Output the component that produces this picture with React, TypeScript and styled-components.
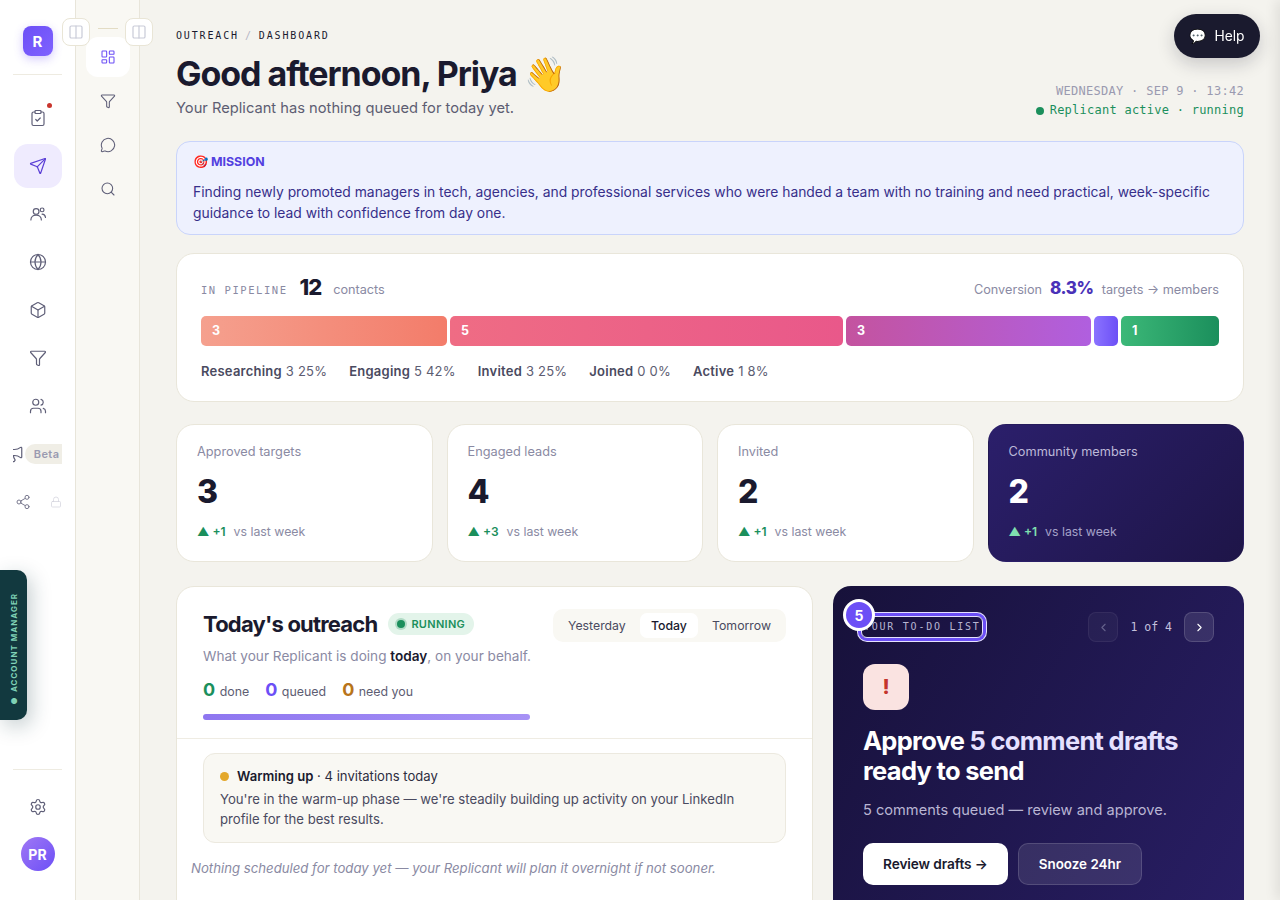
import React from 'react';
import styled, { createGlobalStyle } from 'styled-components';
import { ClipboardCheck, Send, Globe, Box, Filter, Users, Megaphone, Share2, Lock, Settings, Columns2, LayoutDashboard, MessageCircle, Search, ChevronLeft, ChevronRight } from 'lucide-react';

const Global = createGlobalStyle`
  html, body { margin: 0; padding: 0; height: 100%; overflow: hidden; background: #f4f3ee; }
  body { font-family: Inter, "Noto Sans", sans-serif; color: #1a1a2e; }
  * { box-sizing: border-box; }
`;
const mono = `"DejaVu Sans Mono", "Liberation Mono", monospace`;

const Shell = styled.div`display: flex; width: 1280px; height: 900px; overflow: hidden; position: relative;`;
const Rail = styled.aside`
  width: 76px; flex: none; background: #fff; border-right: 1px solid #e8e5da;
  display: flex; flex-direction: column; align-items: center; padding-top: 26px; position: relative;
`;
const Logo = styled.div`
  width: 30px; height: 30px; border-radius: 8px; background: linear-gradient(135deg, #6c4ff6, #7f62ff);
  color: #fff; font-weight: 700; font-size: 15px; display: flex; align-items: center; justify-content: center;
  box-shadow: 0 3px 10px rgba(108,79,246,.3);
`;
const RailDivider = styled.div`width: 49px; height: 1px; background: #eeebe1; flex: none;`;
const TopDivider = styled(RailDivider)`margin: 18px 0 21px;`;
const BottomDivider = styled(RailDivider)`margin-top: auto; margin-bottom: 13px;`;
const RailItem = styled.div<{ $active?: boolean }>`
  width: 48px; height: 44px; flex: none; border-radius: 14px; margin-bottom: 4px; position: relative; overflow: hidden;
  background: ${p => p.$active ? '#efebfe' : 'transparent'};
  color: ${p => p.$active ? '#5b3fd6' : '#5f5f78'};
  display: flex; align-items: center; justify-content: center;
`;
const Dot = styled.span`position: absolute; width: 5px; height: 5px; border-radius: 50%; background: #c9352d; top: 103px; left: 47px;`;
const ClippedRow = styled.div`
  width: 49px; height: 44px; margin-bottom: 4px; flex: none; overflow: hidden; display: flex; align-items: center; gap: 1px;
`;
const BetaPill = styled.span`
  flex: none; background: #f0eee6; color: #9a9ab0; font-size: 11px; font-weight: 600; letter-spacing: .4px;
  border-radius: 10px 0 0 10px; padding: 0 3px 0 9px; height: 20px; width: 37px; line-height: 20px; overflow: hidden;
`;
const ShareRow = styled(ClippedRow)`padding-left: 2px; gap: 19px;`;
const GearWrap = styled.div`color: #5f5f78; height: 48px; display: flex; align-items: center; flex: none;`;
const Avatar = styled.div`
  width: 34px; height: 34px; border-radius: 50%; background: linear-gradient(135deg, #a078f5, #6c4ff6); margin: 6px 0 29px;
  color: #fff; font-size: 14px; font-weight: 700; display: flex; align-items: center; justify-content: center; flex: none;
`;
const ToggleBtn = styled.div<{ $left: number }>`
  position: absolute; top: 18px; left: ${p => p.$left}px; width: 28px; height: 28px; border-radius: 8px; z-index: 5;
  background: #fff; border: 1px solid #e9e5d6; color: #c9cbd8; display: flex; align-items: center; justify-content: center;
`;
const ManagerTab = styled.div`
  position: absolute; left: 0; top: 570px; width: 27px; height: 150px; z-index: 6; background: #12393f; padding-top: 9px;
  border-radius: 0 10px 10px 0; box-shadow: 4px 6px 20px rgba(18,57,63,.25);
  display: flex; align-items: center; justify-content: center;
`;
const ManagerText = styled.span`
  writing-mode: vertical-rl; transform: rotate(180deg); white-space: nowrap; color: #7fd1b5;
  font-size: 8px; font-weight: 700; letter-spacing: 1px;
`;

const SubRail = styled.nav`
  width: 64px; flex: none; background: #f9f8f3; border-right: 1px solid #e8e5da;
  display: flex; flex-direction: column; align-items: center; padding-top: 28px;
`;
const SubLine = styled.div`width: 20px; height: 1px; background: #e3dcc4; margin-bottom: 8px;`;
const SubItem = styled.div<{ $active?: boolean }>`
  width: 44px; height: 40px; flex: none; margin-bottom: 4px; border-radius: 12px; display: flex; align-items: center; justify-content: center;
  background: ${p => p.$active ? '#fff' : 'transparent'}; color: ${p => p.$active ? '#6c4ff6' : '#5f5f78'};
`;

const Main = styled.main`flex: 1; min-width: 0; padding: 29px 36px 0; overflow: hidden;`;
const Crumbs = styled.div`font-family: ${mono}; font-size: 10px; line-height: 14px; letter-spacing: 1.85px; color: #1a1a2e; font-weight: 500; display: flex; gap: 6px;`;
const CrumbSep = styled.span`color: #b5b5c5;`;
const Header = styled.header`display: flex; justify-content: space-between; align-items: flex-end; margin-top: 9px; margin-bottom: 22px;`;
const H1 = styled.h1`margin: 0; font-size: 34px; line-height: 44px; font-weight: 700; letter-spacing: -1.05px; color: #1a1a2e;`;
const Sub = styled.p`margin: 1px 0 0; font-size: 14.7px; line-height: 22px; color: #5d5d72;`;
const Stamp = styled.div`text-align: right; font-family: ${mono}; font-size: 12px; line-height: 19px; margin-bottom: -1px; letter-spacing: .3px; color: #9a9ab0;`;
const Active = styled.div`color: #1b8f5c; display: flex; align-items: center; justify-content: flex-end; gap: 6px; letter-spacing: .25px;`;
const ActiveDot = styled.i`width: 8px; height: 8px; border-radius: 50%; background: #1b8f5c;`;

const Mission = styled.section`
  background: #eef1fe; border: 1px solid #c9d4fb; border-radius: 14px; padding: 11px 16px 10px; margin-bottom: 18px;
`;
const MissionTitle = styled.div`font-size: 12.4px; line-height: 18px; font-weight: 700; color: #5240e0; margin-bottom: 11px;`;
const MissionText = styled.p`margin: 0; font-size: 13.86px; line-height: 21px; color: #372f8a;`;

const Card = styled.section`background: #fff; border: 1px solid #e9e6da; border-radius: 18px;`;
const Pipeline = styled(Card)`padding: 19px 24px 20px; margin-bottom: 22px; height: 149px;`;
const PipeHead = styled.div`display: flex; justify-content: space-between; align-items: center; height: 32px; margin-bottom: 11px;`;
const PipeSide = styled.div`display: flex; align-items: center;`;
const PipeLabel = styled.span`font-family: ${mono}; font-size: 10.5px; letter-spacing: 1.55px; color: #8a8aa3; margin-right: 12px; padding-top: 2px;`;
const PipeCount = styled.span`font-size: 22px; font-weight: 800; letter-spacing: -1.1px; color: #1a1a2e; margin: -4px 12px 0 0;`;
const PipeNote = styled.span`font-size: 12.7px; color: #8a8aa3;`;
const Conv = styled.span`font-size: 17px; font-weight: 800; letter-spacing: -.4px; color: #4a32b8; margin: -2px 8px 0;`;
const Bar = styled.div`display: flex; gap: 3px; height: 30px;`;
const Seg = styled.div<{ $w: number; $bg: string }>`
  width: ${p => p.$w}px; flex: none; border-radius: 5px; background: ${p => p.$bg};
  color: #fff; font-size: 12.5px; font-weight: 700; padding-left: 11px; line-height: 29px;
`;
const Legend = styled.div`display: flex; gap: 22px; margin-top: 16px; font-size: 13px; line-height: 18px; color: #5d5d72; letter-spacing: .23px;`;
const LegendKey = styled.b`font-weight: 600; color: #4a4a60;`;

const Stats = styled.div`display: grid; grid-template-columns: repeat(4, 1fr); gap: 14px; margin-bottom: 24px;`;
const Stat = styled.div<{ $dark?: boolean }>`
  height: 138px; border-radius: 18px; padding: 18px 20px 0;
  background: ${p => p.$dark ? 'linear-gradient(135deg, #2b1f6b, #1e1548)' : '#fff'};
  border: 1px solid ${p => p.$dark ? 'transparent' : '#e9e6da'};
`;
const StatLabel = styled.div<{ $dark?: boolean }>`font-size: 12.75px; line-height: 18px; color: ${p => p.$dark ? '#bcb8d8' : '#8a8aa3'};`;
const StatNum = styled.div<{ $dark?: boolean }>`font-size: 32px; line-height: 40px; font-weight: 800; margin-top: 11px; color: ${p => p.$dark ? '#fff' : '#1a1a2e'};`;
const StatDelta = styled.div<{ $dark?: boolean }>`font-size: 12.3px; line-height: 18px; margin-top: 11px; color: ${p => p.$dark ? '#a5a1c8' : '#8a8aa3'}; display: flex; gap: 8px;`;
const Up = styled.b<{ $dark?: boolean }>`font-weight: 600; font-size: 12px; color: ${p => p.$dark ? '#7fe0b0' : '#1b8f5c'};`;

const Lower = styled.div`display: grid; grid-template-columns: 637px 411px; gap: 20px;`;
const Outreach = styled(Card)`height: 420px; border-radius: 18px 18px 0 0;`;
const OutTop = styled.div`padding: 21px 26px 18px; border-bottom: 1px solid #efece3; height: 152px; position: relative;`;
const TitleRow = styled.div`display: flex; align-items: center; gap: 11px; height: 32px;`;
const OutTitle = styled.h2`margin: 0; font-size: 22px; font-weight: 700; letter-spacing: -.8px; color: #1a1a2e;`;
const Running = styled.span`
  height: 22px; padding: 0 9px; border-radius: 11px; background: #e3f4ea; color: #1b8f5c; font-size: 11px; font-weight: 600; letter-spacing: .3px;
  display: inline-flex; align-items: center; gap: 6px;
`;
const RunDot = styled.i`width: 8px; height: 8px; border-radius: 50%; background: #1b8f5c; box-shadow: 0 0 0 2px rgba(27,143,92,.25);`;
const Tabs = styled.div`position: absolute; right: 26px; top: 22px; width: 233px; height: 33px; background: #f9f8f3; border-radius: 10px; display: flex; align-items: center; padding: 0 4px; justify-content: space-between;`;
const Tab = styled.span<{ $active?: boolean }>`
  height: 25px; line-height: 25px; padding: 0 11px; border-radius: 7px; font-size: 12.3px; font-weight: ${p => p.$active ? 500 : 400};
  color: ${p => p.$active ? '#1a1a2e' : '#4a4a60'}; background: ${p => p.$active ? '#fff' : 'transparent'};
`;
const OutSub = styled.p`margin: 6px 0 0; font-size: 13.6px; line-height: 20px; color: #8a8aa3; b { color: #1a1a2e; font-weight: 600; }`;
const Counts = styled.div`display: flex; gap: 16px; margin-top: 13px; height: 24px; align-items: baseline;`;
const CountItem = styled.span`font-size: 12.4px; color: #5d5d72; display: inline-flex; align-items: baseline; gap: 4.5px;`;
const CountNum = styled.b<{ $c: string }>`font-size: 18px; font-weight: 700; color: ${p => p.$c};`;
const Progress = styled.div`width: 327px; height: 6px; border-radius: 3px; margin-top: 11px; background: linear-gradient(90deg, #8e76f0, #a792f5);`;
const Warm = styled.div`margin: 14px 26px 0; height: 90px; background: #f9f8f3; border: 1px solid #ece9df; border-radius: 12px; padding: 12px 16px;`;
const WarmHead = styled.div`display: flex; align-items: center; gap: 8px; font-size: 13.1px; line-height: 21px; color: #2d2d40; b { color: #1a1a2e; font-weight: 600; }`;
const WarmDot = styled.i`width: 9px; height: 9px; border-radius: 50%; background: #e4a82b;`;
const WarmText = styled.p`margin: 2px 0 0; font-size: 13.15px; line-height: 20px; color: #4a4a60;`;
const Note = styled.p`margin: 15px 0 0 14px; font-size: 13.2px; line-height: 20px; font-style: italic; color: #8a8aa3;`;

const Todo = styled.section`
  height: 420px; border-radius: 18px 18px 0 0; background: linear-gradient(120deg, #17113a, #2a1f68); padding: 26px 30px 0; position: relative;
`;
const TodoTop = styled.div`display: flex; justify-content: space-between; align-items: center; height: 30px;`;
const TagRing = styled.div`
  margin-left: -2px; height: 22px; padding: 0 3px 0 2px; width: 122px; border: 1px solid #e4e0ff; border-radius: 6px;
  box-shadow: 0 0 0 3px #6c4ff6, 0 0 0 4px #e6e2ff; font-family: ${mono}; font-size: 10px; line-height: 19px; letter-spacing: 1.75px; color: #b8b5d2;
  white-space: nowrap; overflow: hidden;
`;
const CountBadge = styled.span`
  position: absolute; left: 10px; top: 13px; width: 32px; height: 32px; border-radius: 50%; background: #6c4ff6; border: 3px solid #fff;
  color: #fff; font-size: 14px; font-weight: 700; display: flex; align-items: center; justify-content: center;
`;
const Pager = styled.div`display: flex; align-items: center; gap: 12px; font-family: ${mono}; font-size: 11.5px; color: #c4c0dc;`;
const PageBtn = styled.span<{ $off?: boolean }>`
  width: 30px; height: 30px; border-radius: 8px; display: flex; align-items: center; justify-content: center;
  background: ${p => p.$off ? 'rgba(255,255,255,.04)' : 'rgba(255,255,255,.1)'}; border: 1px solid rgba(255,255,255,${p => p.$off ? .06 : .14});
  color: ${p => p.$off ? '#66628c' : '#fff'};
`;
const Alert = styled.div`width: 46px; height: 46px; border-radius: 12px; background: #fae3e1; color: #c4342c; font-size: 20px; font-weight: 800; display: flex; align-items: center; justify-content: center; margin-top: 22px;`;
const TodoTitle = styled.h3`margin: 16px 0 0; font-size: 25.5px; line-height: 30px; font-weight: 700; letter-spacing: -.7px; color: #fff; span { color: #e6e1ff; }`;
const TodoSub = styled.p`margin: 13px 0 0; font-size: 14.6px; line-height: 22px; color: #b9b5d3;`;
const Actions = styled.div`display: flex; gap: 10px; margin-top: 22px;`;
const Primary = styled.span`height: 42px; padding: 0 20px; line-height: 42px; border-radius: 10px; background: #fff; color: #1a1a2e; font-size: 13.7px; font-weight: 600; letter-spacing: -.1px;`;
const Ghost = styled.span`height: 42px; padding: 0 20px; line-height: 40px; border-radius: 10px; background: rgba(255,255,255,.1); border: 1px solid rgba(255,255,255,.14); color: #fff; font-size: 13.4px; font-weight: 600;`;

const Help = styled.div`
  position: fixed; top: 14px; left: 1174px; width: 86px; height: 44px; border-radius: 22px; background: #1a1a2e; color: #fff; z-index: 9;
  display: flex; align-items: center; justify-content: center; gap: 8px; font-size: 13.8px; box-shadow: 0 6px 18px rgba(26,26,46,.2);
`;
const EdgeShadow = styled.div`position: fixed; top: 0; left: 1280px; width: 10px; height: 900px; box-shadow: -2px 0 14px rgba(0,0,0,.12); z-index: 3;`;

const TeamIcon = () => (
  <svg width="18" height="18" viewBox="0 0 24 24" fill="none" stroke="currentColor" strokeWidth="1.6" strokeLinecap="round" strokeLinejoin="round">
    <circle cx="9.5" cy="8.5" r="3.8" />
    <path d="M2.5 20c0-3.9 3-6.5 7-6.5s7 2.6 7 6.5" />
    <circle cx="17.5" cy="6.5" r="2.5" />
    <path d="M17.5 12.2c2.5.1 4.2 1.8 4.5 4.4" />
  </svg>
);

const stats = [
  { label: 'Approved targets', n: '3', d: '+1' },
  { label: 'Engaged leads', n: '4', d: '+3' },
  { label: 'Invited', n: '2', d: '+1' },
  { label: 'Community members', n: '2', d: '+1', dark: true },
];
const segs = [
  { w: 246, t: '3', bg: 'linear-gradient(90deg,#f5a08e,#f37c6a)' },
  { w: 393, t: '5', bg: 'linear-gradient(90deg,#ef6c84,#e9588a)' },
  { w: 245, t: '3', bg: 'linear-gradient(90deg,#c4539f,#b05fdf)' },
  { w: 24, t: '', bg: 'linear-gradient(90deg,#8b73ff,#6c4ff6)' },
  { w: 98, t: '1', bg: 'linear-gradient(90deg,#3cb878,#1b8f5c)' },
];
const legend = [['Researching', '3 25%'], ['Engaging', '5 42%'], ['Invited', '3 25%'], ['Joined', '0 0%'], ['Active', '1 8%']];

export default function App() {
  const ic = { size: 18, strokeWidth: 1.6 };
  const sic = { size: 16, strokeWidth: 1.6 };
  return (
    <Shell>
      <Global />
      <Rail>
        <Logo>R</Logo>
        <TopDivider />
        <RailItem><ClipboardCheck {...ic} /></RailItem>
        <Dot />
        <RailItem $active><Send {...ic} /></RailItem>
        <RailItem><TeamIcon /></RailItem>
        <RailItem><Globe {...ic} /></RailItem>
        <RailItem><Box {...ic} /></RailItem>
        <RailItem><Filter {...ic} /></RailItem>
        <RailItem><Users {...ic} /></RailItem>
        <ClippedRow><Megaphone size={18} strokeWidth={1.6} color="#5f5f78" style={{ marginLeft: -7.25, flex: 'none' }} /><BetaPill>Beta</BetaPill></ClippedRow>
        <ShareRow><Share2 size={16} strokeWidth={1.5} color="#7a7a90" style={{ flex: 'none' }} /><Lock size={12} strokeWidth={1.5} color="#d4d4de" style={{ flex: 'none' }} /></ShareRow>
        <BottomDivider />
        <GearWrap><Settings {...ic} /></GearWrap>
        <Avatar>PR</Avatar>
      </Rail>
      <ToggleBtn $left={62}><Columns2 size={16} strokeWidth={1.8} /></ToggleBtn>
      <ToggleBtn $left={125}><Columns2 size={16} strokeWidth={1.8} /></ToggleBtn>
      <ManagerTab><ManagerText>● ACCOUNT MANAGER</ManagerText></ManagerTab>
      <SubRail>
        <SubLine />
        <SubItem $active><LayoutDashboard {...sic} /></SubItem>
        <SubItem><Filter {...sic} /></SubItem>
        <SubItem><MessageCircle {...sic} /></SubItem>
        <SubItem><Search {...sic} /></SubItem>
      </SubRail>
      <Main>
        <Crumbs><span>OUTREACH</span><CrumbSep>/</CrumbSep><span>DASHBOARD</span></Crumbs>
        <Header>
          <div>
            <H1>Good afternoon, Priya 👋</H1>
            <Sub>Your Replicant has nothing queued for today yet.</Sub>
          </div>
          <Stamp>
            <div>WEDNESDAY · SEP 9 · 13:42</div>
            <Active><ActiveDot />Replicant active · running</Active>
          </Stamp>
        </Header>
        <Mission>
          <MissionTitle>🎯 MISSION</MissionTitle>
          <MissionText>Finding newly promoted managers in tech, agencies, and professional services who were handed a team with no training and need practical, week-specific guidance to lead with confidence from day one.</MissionText>
        </Mission>
        <Pipeline>
          <PipeHead>
            <PipeSide><PipeLabel>IN PIPELINE</PipeLabel><PipeCount>12</PipeCount><PipeNote>contacts</PipeNote></PipeSide>
            <PipeSide><PipeNote>Conversion</PipeNote><Conv>8.3%</Conv><PipeNote>targets → members</PipeNote></PipeSide>
          </PipeHead>
          <Bar>{segs.map((s, i) => <Seg key={i} $w={s.w} $bg={s.bg}>{s.t}</Seg>)}</Bar>
          <Legend>{legend.map(([k, v]) => <span key={k}><LegendKey>{k}</LegendKey> {v}</span>)}</Legend>
        </Pipeline>
        <Stats>
          {stats.map(s => (
            <Stat key={s.label} $dark={s.dark}>
              <StatLabel $dark={s.dark}>{s.label}</StatLabel>
              <StatNum $dark={s.dark}>{s.n}</StatNum>
              <StatDelta $dark={s.dark}><Up $dark={s.dark}>▲ {s.d}</Up> vs last week</StatDelta>
            </Stat>
          ))}
        </Stats>
        <Lower>
          <Outreach>
            <OutTop>
              <TitleRow><OutTitle>Today's outreach</OutTitle><Running><RunDot />RUNNING</Running></TitleRow>
              <Tabs><Tab>Yesterday</Tab><Tab $active>Today</Tab><Tab>Tomorrow</Tab></Tabs>
              <OutSub>What your Replicant is doing <b>today</b>, on your behalf.</OutSub>
              <Counts>
                <CountItem><CountNum $c="#1b8f5c">0</CountNum>done</CountItem>
                <CountItem><CountNum $c="#6c4ff6">0</CountNum>queued</CountItem>
                <CountItem><CountNum $c="#b8741a">0</CountNum>need you</CountItem>
              </Counts>
              <Progress />
            </OutTop>
            <Warm>
              <WarmHead><WarmDot /><span><b>Warming up</b> · 4 invitations today</span></WarmHead>
              <WarmText>You're in the warm-up phase — we're steadily building up activity on your LinkedIn profile for the best results.</WarmText>
            </Warm>
            <Note>Nothing scheduled for today yet — your Replicant will plan it overnight if not sooner.</Note>
          </Outreach>
          <Todo>
            <CountBadge>5</CountBadge>
            <TodoTop>
              <TagRing>YOUR TO-DO LIST</TagRing>
              <Pager>
                <PageBtn $off><ChevronLeft size={13} /></PageBtn>
                <span>1 of 4</span>
                <PageBtn><ChevronRight size={13} /></PageBtn>
              </Pager>
            </TodoTop>
            <Alert>!</Alert>
            <TodoTitle>Approve <span>5 comment drafts</span> ready to send</TodoTitle>
            <TodoSub>5 comments queued — review and approve.</TodoSub>
            <Actions><Primary>Review drafts →</Primary><Ghost>Snooze 24hr</Ghost></Actions>
          </Todo>
        </Lower>
      </Main>
      <Help><span>💬</span>Help</Help>
      <EdgeShadow />
    </Shell>
  );
}
